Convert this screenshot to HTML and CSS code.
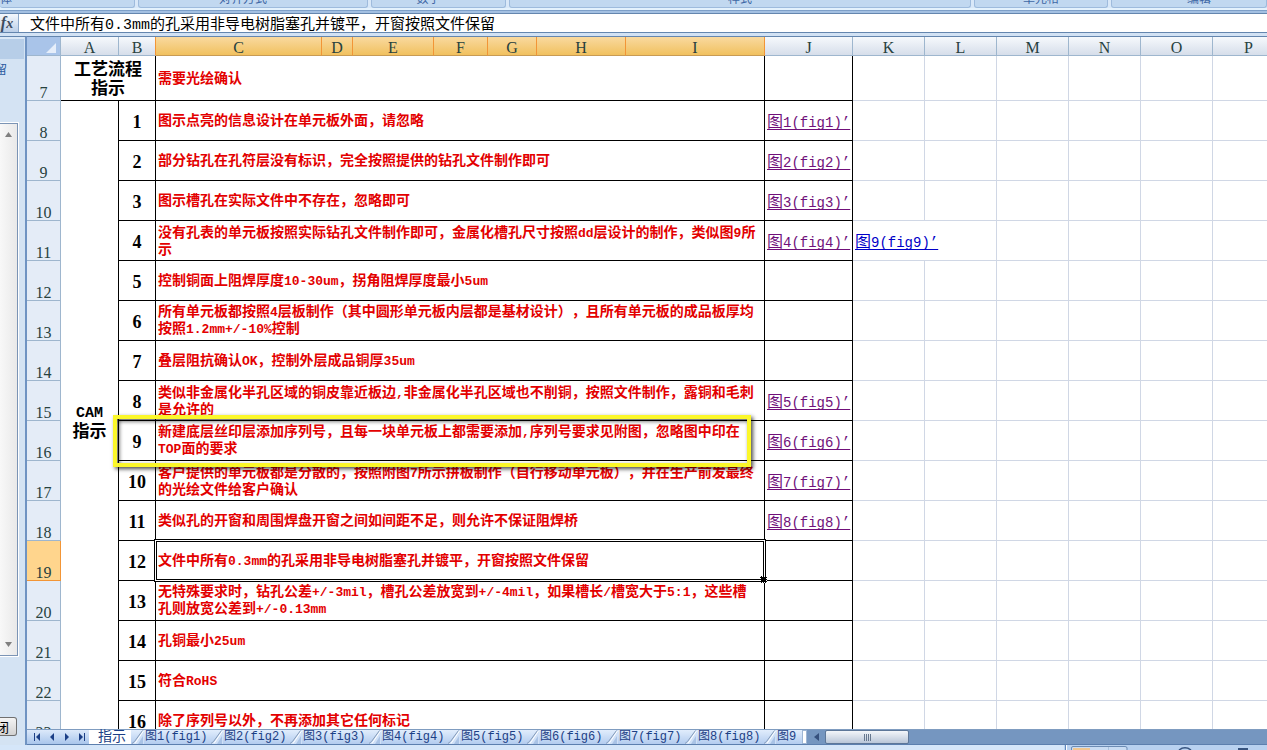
FILE: index.html
```html
<!DOCTYPE html>
<html lang="zh-CN">
<head>
<meta charset="utf-8">
<title>工艺指示</title>
<link rel="stylesheet" href="styles.css">
</head>
<body>
<svg class="defs" aria-hidden="true">
  <symbol id="slant" viewBox="0 0 13 14"><path d="M12 0 3 12 1 14H13V0z" fill="#cfe0f7"/><path d="M11.500 .5 3.500 11.500 1 13.500" fill="none" stroke="#8299b8"/><path d="M12.500 1 4 13.500" fill="none" stroke="#fff"/><path d="M12 6v8H7z" fill="#a9c3e6"/></symbol>
</svg>
<div class="app">
  <div class="ribbon">
    <div class="group g-font"><span>字体</span></div>
    <div class="group g-align"><span>对齐方式</span></div>
    <div class="group g-num"><span>数字</span></div>
    <div class="group g-style"><span>样式</span></div>
    <div class="group g-cell"><span>单元格</span></div>
    <div class="group g-edit"><span>编辑</span></div>
  </div>
  <div class="formula">
    <button class="fx" aria-label="插入函数">f<small>x</small></button>
    <input type="text" aria-label="编辑栏" value="文件中所有0.3mm的孔采用非导电树脂塞孔并镀平，开窗按照文件保留">
  </div>
  <div class="work">
    <aside class="pane">
      <div class="pane-title"></div>
      <div class="pane-text"><span>留</span></div>
      <div class="pane-list">
        <button class="arrow" aria-label="向上"><svg width="7" height="5"><path d="M0 5 3.500 0 7 5z" fill="#808080"/></svg></button>
        <button class="arrow" aria-label="向下"><svg width="7" height="5"><path d="M0 0 3.500 5 7 0z" fill="#808080"/></svg></button>
      </div>
      <div class="pane-foot"><button class="close" aria-label="关闭">闭</button></div>
    </aside>
    <main class="book">
      <div class="sheet">
        <table>
          <colgroup><col class="w-head"><col class="w-a"><col class="w-b"><col class="w-c"><col class="w-d"><col class="w-e"><col class="w-f"><col class="w-g"><col class="w-h"><col class="w-i"><col class="w-j"><col class="w-k"><col class="w-k"><col class="w-k"><col class="w-k"><col class="w-k"><col class="w-k"></colgroup>
          <thead>
            <tr><th class="corner"><svg width="10" height="10"><path d="M10 0V10H0z" fill="#e6eefa"/></svg></th><th>A</th><th class="pre">B</th><th class="on">C</th><th class="on">D</th><th class="on">E</th><th class="on">F</th><th class="on">G</th><th class="on">H</th><th class="on">I</th><th>J</th><th>K</th><th>L</th><th>M</th><th>N</th><th>O</th><th>P</th></tr>
          </thead>
          <tbody>
            <tr class="tall"><th>7</th><td class="title ink" colspan="2">工艺流程<br>指示</td><td class="note ink" colspan="7">需要光绘确认</td><td class="ink"></td><td></td><td></td><td></td><td></td><td></td><td></td></tr>
            <tr><th>8</th><td class="title ink" rowspan="16"><span class="cam">CAM</span><br>指示</td><td class="no ink">1</td><td class="note ink" colspan="7">图示点亮的信息设计在单元板外面，请忽略</td><td class="ink link"><a class="seen" href="#fig1">图<span>1(fig1)’</span></a></td><td></td><td></td><td></td><td></td><td></td><td></td></tr>
            <tr><th>9</th><td class="no ink">2</td><td class="note ink" colspan="7">部分钻孔在孔符层没有标识，完全按照提供的钻孔文件制作即可</td><td class="ink link"><a class="seen" href="#fig2">图<span>2(fig2)’</span></a></td><td></td><td></td><td></td><td></td><td></td><td></td></tr>
            <tr><th>10</th><td class="no ink">3</td><td class="note ink" colspan="7">图示槽孔在实际文件中不存在，忽略即可</td><td class="ink link"><a class="seen" href="#fig3">图<span>3(fig3)’</span></a></td><td></td><td></td><td></td><td></td><td></td><td></td></tr>
            <tr><th>11</th><td class="no ink">4</td><td class="note ink" colspan="7">没有孔表的单元板按照实际钻孔文件制作即可，金属化槽孔尺寸按照<span>dd</span>层设计的制作，类似图<span>9</span>所<br>示</td><td class="ink link"><a class="seen" href="#fig4">图<span>4(fig4)’</span></a></td><td class="link" colspan="2"><a href="#fig9">图<span>9(fig9)’</span></a></td><td></td><td></td><td></td><td></td></tr>
            <tr><th>12</th><td class="no ink">5</td><td class="note ink" colspan="7">控制铜面上阻焊厚度<span>10-30um</span>，拐角阻焊厚度最小<span>5um</span></td><td class="ink"></td><td></td><td></td><td></td><td></td><td></td><td></td></tr>
            <tr><th>13</th><td class="no ink">6</td><td class="note ink" colspan="7">所有单元板都按照<span>4</span>层板制作（其中圆形单元板内层都是基材设计），且所有单元板的成品板厚均<br>按照<span>1.2mm+/-10%</span>控制</td><td class="ink"></td><td></td><td></td><td></td><td></td><td></td><td></td></tr>
            <tr><th>14</th><td class="no ink">7</td><td class="note ink" colspan="7">叠层阻抗确认<span>OK</span>，控制外层成品铜厚<span>35um</span></td><td class="ink"></td><td></td><td></td><td></td><td></td><td></td><td></td></tr>
            <tr><th>15</th><td class="no ink">8</td><td class="note ink" colspan="7">类似非金属化半孔区域的铜皮靠近板边<span>,</span>非金属化半孔区域也不削铜，按照文件制作，露铜和毛刺<br>是允许的</td><td class="ink link"><a class="seen" href="#fig5">图<span>5(fig5)’</span></a></td><td></td><td></td><td></td><td></td><td></td><td></td></tr>
            <tr><th>16</th><td class="no ink">9</td><td class="note ink" colspan="7">新建底层丝印层添加序列号，且每一块单元板上都需要添加<span>,</span>序列号要求见附图，忽略图中印在<br><span>TOP</span>面的要求</td><td class="ink link"><a class="seen" href="#fig6">图<span>6(fig6)’</span></a></td><td></td><td></td><td></td><td></td><td></td><td></td></tr>
            <tr><th>17</th><td class="no ink">10</td><td class="note ink" colspan="7">客户提供的单元板都是分散的，按照附图<span>7</span>所示拼板制作（自行移动单元板），并在生产前发最终<br>的光绘文件给客户确认</td><td class="ink link"><a class="seen" href="#fig7">图<span>7(fig7)’</span></a></td><td></td><td></td><td></td><td></td><td></td><td></td></tr>
            <tr><th>18</th><td class="no ink">11</td><td class="note ink" colspan="7">类似孔的开窗和周围焊盘开窗之间如间距不足，则允许不保证阻焊桥</td><td class="ink link"><a class="seen" href="#fig8">图<span>8(fig8)’</span></a></td><td></td><td></td><td></td><td></td><td></td><td></td></tr>
            <tr><th class="on">19</th><td class="no ink">12</td><td class="note ink active" colspan="7">文件中所有<span>0.3mm</span>的孔采用非导电树脂塞孔并镀平，开窗按照文件保留</td><td class="ink"></td><td></td><td></td><td></td><td></td><td></td><td></td></tr>
            <tr><th>20</th><td class="no ink">13</td><td class="note ink" colspan="7">无特殊要求时，钻孔公差<span>+/-3mil</span>，槽孔公差放宽到<span>+/-4mil</span>，如果槽长<span>/</span>槽宽大于<span>5:1</span>，这些槽<br>孔则放宽公差到<span>+/-0.13mm</span></td><td class="ink"></td><td></td><td></td><td></td><td></td><td></td><td></td></tr>
            <tr><th>21</th><td class="no ink">14</td><td class="note ink" colspan="7">孔铜最小<span>25um</span></td><td class="ink"></td><td></td><td></td><td></td><td></td><td></td><td></td></tr>
            <tr><th>22</th><td class="no ink">15</td><td class="note ink" colspan="7">符合<span>RoHS</span></td><td class="ink"></td><td></td><td></td><td></td><td></td><td></td><td></td></tr>
            <tr><th>23</th><td class="no ink">16</td><td class="note ink" colspan="7">除了序列号以外，不再添加其它任何标记</td><td class="ink"></td><td></td><td></td><td></td><td></td><td></td><td></td></tr>
          </tbody>
        </table>
        <div class="marker"></div>
      </div>
      <div class="tabbar">
        <div class="nav">
          <button aria-label="第一张"><svg width="8" height="8"><path d="M1.500 0v8" stroke="#1c3f86" stroke-width="1"/><path d="M7 0v8L3 4z" fill="#1c3f86"/></svg></button>
          <button aria-label="上一张"><svg width="8" height="8"><path d="M6 0v8L2 4z" fill="#1c3f86"/></svg></button>
          <button aria-label="下一张"><svg width="8" height="8"><path d="M2 0v8l4-4z" fill="#1c3f86"/></svg></button>
          <button aria-label="最后一张"><svg width="8" height="8"><path d="M6.500 0v8" stroke="#1c3f86" stroke-width="1"/><path d="M1 0v8l4-4z" fill="#1c3f86"/></svg></button>
        </div>
        <div class="tabs">
          <button class="current">指示</button>
          <button class="tab"><svg width="13" height="14"><use href="#slant"/></svg>图1(fig1)</button>
          <button class="tab"><svg width="13" height="14"><use href="#slant"/></svg>图2(fig2)</button>
          <button class="tab"><svg width="13" height="14"><use href="#slant"/></svg>图3(fig3)</button>
          <button class="tab"><svg width="13" height="14"><use href="#slant"/></svg>图4(fig4)</button>
          <button class="tab"><svg width="13" height="14"><use href="#slant"/></svg>图5(fig5)</button>
          <button class="tab"><svg width="13" height="14"><use href="#slant"/></svg>图6(fig6)</button>
          <button class="tab"><svg width="13" height="14"><use href="#slant"/></svg>图7(fig7)</button>
          <button class="tab"><svg width="13" height="14"><use href="#slant"/></svg>图8(fig8)</button>
          <button class="tab cut"><svg width="13" height="14"><use href="#slant"/></svg>图9</button>
        </div>
        <div class="split"></div>
        <div class="scroll">
          <button class="left" aria-label="向左"><svg width="5" height="8"><path d="M5 0v8L0 4z" fill="#35507d"/></svg></button>
          <div class="thumb"><i></i><i></i><i></i><i></i></div>
        </div>
      </div>
    </main>
  </div>
  <footer class="status">
    <svg width="202" height="5">
      <path d="M.5 0v5" stroke="#5f86ba"/><path d="M1.500 0v5" stroke="#fff"/>
      <path d="M6.500 5V3q0-1.500 1.500-1.500H60q2 0 2 1.500v2" fill="#c9dcf3" stroke="#6c8bb3"/>
      <path d="M8 3h17v2H8z" fill="#f0c690"/><path d="M43.500 2v3" stroke="#a9c0dd"/>
      <path d="M114 5q6-4.500 12 0" fill="none" stroke="#36537f" stroke-width="1.500"/><path d="M173 4h10" stroke="#36537f" stroke-width="2"/>
    </svg>
  </footer>
</div>
</body>
</html>
```
FILE: styles.css
```css
* { box-sizing: border-box; }
body {
  margin: 0;
  overflow: hidden;
  font-family: "Liberation Mono", "Noto Sans CJK SC", monospace;
  text-spacing-trim: space-all;
  background: #d5e5f5;
}
button, input { margin: 0; padding: 0; border: 0; font: inherit; color: inherit; background: none; }
.defs { display: none; }
.app { display: flex; flex-direction: column; height: 100vh; }

/* ribbon */
.ribbon {
  display: flex;
  gap: 3px;
  flex: none;
  height: 13px;
  padding-bottom: 5px;
  background: linear-gradient(#d9e8f8 0 8px, #e4f2fd 8px 10px, #7d9fc8 10px 11px, #a3c0e2 11px);
}
.group {
  display: flex;
  align-items: flex-end;
  justify-content: center;
  height: 8px;
  overflow: hidden;
  border: 1px solid #9ebbdd;
  border-top: 0;
  border-radius: 0 0 3px 3px;
  background: #c1d8f0;
  color: #3e67a5;
  font-size: 12px;
  line-height: 14px;
}
.g-font { width: 135px; padding-right: 118px; border-left: 0; }
.g-align { width: 230px; padding-right: 20px; }
.g-num { width: 135px; padding-right: 20px; }
.g-style { width: 462px; }
.g-cell { width: 134px; }
.g-edit { flex: 1; padding-left: 20px; }

/* formula bar */
.formula {
  display: flex;
  flex: none;
  height: 20px;
  border-top: 1px solid #6486ae;
  border-bottom: 1px solid #6486ae;
  background: #fff;
}
.fx {
  width: 19px;
  padding-right: 4px;
  border-right: 1px solid #8ba8cb;
  background: linear-gradient(#f4f8fd, #bccfe8);
  color: #3e4c5e;
  font: italic bold 16px/17px "Liberation Serif", serif;
}
.fx small { font-size: 14px; }
.formula input { flex: 1; min-width: 0; padding-left: 11px; font-size: 15px; color: #000; }

.work { display: flex; flex: 1; min-height: 0; border-top: 3px solid #d2e2f4; }

/* task pane */
.pane {
  display: flex;
  flex-direction: column;
  flex: none;
  width: 27px;
  overflow: hidden;
  border-top: 1px solid #6486ae;
  border-right: 2px solid #6f93c2;
  background: #d4e3f3;
}
.pane-title { height: 22px; margin-right: 1px; border-top: 2px solid #dbe8f6; background: #b7cee8; }
.pane-text {
  display: flex;
  align-items: flex-start;
  justify-content: flex-end;
  width: 7px;
  height: 14px;
  margin-top: 5px;
  font-size: 12px;
  line-height: 14px;
  color: #2c5aa0;
}
.pane-list {
  display: flex;
  flex: 1;
  flex-direction: column;
  justify-content: space-between;
  align-items: center;
  width: 18px;
  margin-top: 45px;
  padding: 4px 1px 5px 0;
  border: 1px solid #7b94b5;
  border-left: 0;
  background: linear-gradient(90deg, #f8f8f8, #e9e9e9);
  outline: 1px solid #fff;
}
.arrow { display: grid; place-items: center; width: 17px; height: 12px; }
.pane-foot { height: 89px; padding-top: 61px; }
.close {
  display: flex;
  justify-content: flex-end;
  align-items: center;
  width: 17px;
  height: 19px;
  padding-right: 7px;
  border: 1px solid #707070;
  border-left: 0;
  border-radius: 0 3px 3px 0;
  background: linear-gradient(#f4f4f4, #d2d2d2);
  font-size: 13px;
  white-space: nowrap;
}

/* sheet */
.book { display: flex; flex: 1; flex-direction: column; min-width: 0; }
.sheet { position: relative; flex: 1; min-height: 0; overflow: hidden; border-top: 1px solid #6486ae; background: #fff; }
table { width: 1258px; table-layout: fixed; border-spacing: 0; }
.w-head { width: 34px; } .w-a { width: 58px; } .w-b { width: 37px; } .w-c { width: 166px; }
.w-d { width: 31px; } .w-e { width: 81px; } .w-f { width: 54px; } .w-g { width: 49px; }
.w-h { width: 89px; } .w-i { width: 139px; } .w-j { width: 88px; } .w-k { width: 72px; }
tr { height: 40px; }
.tall { height: 45px; }
thead tr { height: 19px; }
th, td { padding: 0; border: 0 solid #d0d7e5; border-width: 0 1px 1px 0; }
th {
  border-color: #9eb6ce;
  background: #e4ecf7;
  color: #27413e;
  font: 16px/16px "Liberation Serif", serif;
}
thead th { padding-top: 2px; background: linear-gradient(#f6f9fc, #d6deea); line-height: 15px; }
tbody th { vertical-align: bottom; line-height: 14px; }
thead th.on { border-color: #f29536; border-bottom-color: #c89b54; background: linear-gradient(#f9d99f, #f1c15f); }
thead th.pre { border-right-color: #f29536; }
tbody th.on { border-color: #f29536; background: #ffd58d; }
thead .corner { padding: 3px 4px 0 0; background: #a9c4e9; text-align: right; line-height: 0; }
.ink { border-color: #000; }
.title { padding-top: 3px; text-align: center; font-size: 17px; line-height: 19px; font-weight: bold; }
.cam { font-size: 15px; }
.no { padding-top: 2px; text-align: center; font: bold 18px/18px "Liberation Serif", serif; }
.note { padding: 1px 0 0 2px; color: #e30000; font-size: 14px; line-height: 16px; font-weight: bold; white-space: nowrap; }
.note span { font-size: 13px; }
.link { padding: 4px 0 0 2px; font-size: 16px; line-height: 18px; white-space: nowrap; }
.link span { font-size: 14px; }
.link a { color: #0000c8; text-decoration: underline 1px; text-underline-offset: 2px; text-decoration-skip-ink: none; }
.link .seen { color: #70107a; }

/* selected cell frame and fill handle */
.active { position: relative; }
.active::before {
  content: "";
  position: absolute;
  inset: -2px;
  border: 1px solid #000;
  box-shadow: inset 0 0 0 1px #fff, inset 0 0 0 2px #000;
}
.active::after {
  content: "";
  position: absolute;
  right: -3px;
  bottom: -3px;
  width: 5px;
  height: 5px;
  border: 1px dotted #fff;
  background: #000;
}
.marker {
  position: absolute;
  left: 86px;
  top: 378px;
  width: 638px;
  height: 52px;
  border: 4px solid #fbf72a;
  box-shadow: 2px 2px 4px rgba(0, 0, 0, .7), inset 2px 2px 4px rgba(0, 0, 0, .7);
}

/* sheet tabs and horizontal scroll */
.tabbar { display: flex; flex: none; height: 16px; border-top: 1px solid #7f9cc0; border-bottom: 1px solid #5c7fae; background: #7596c0; }
.nav { display: flex; align-items: center; width: 62px; padding-left: 2px; background: linear-gradient(#dce9fa, #a9c6ec); }
.nav button { display: grid; place-items: center; width: 15px; height: 14px; }
.tabs { display: flex; width: 713px; background: linear-gradient(#e1edfc, #b3ccef); color: #1c3f86; }
.tabs button { display: flex; flex: none; align-items: center; height: 14px; line-height: 14px; white-space: nowrap; }
.tabs .current { width: 42px; padding-left: 9px; background: #fff; font-size: 14px; }
.tabs .tab { gap: 1px; width: 79px; font-size: 12px; line-height: 16px; }
.tabs .cut { width: 39px; overflow: hidden; }
.split { width: 5px; border: 1px solid #9eb6d4; background: #fff; }
.scroll { display: flex; flex: 1; }
.left { display: grid; place-items: center; width: 18px; }
.thumb {
  display: flex;
  justify-content: center;
  align-items: center;
  gap: 1px;
  width: 84px;
  border: 1px solid #5d7799;
  border-radius: 2px;
  background: linear-gradient(#f3f6fa, #b9c6d8);
}
.thumb i { width: 1px; height: 7px; background: #66788f; }

.status { display: flex; justify-content: flex-end; flex: none; height: 5px; background: linear-gradient(90deg, #d5e6f9 84%, #b8d1f0 84%); }
```
